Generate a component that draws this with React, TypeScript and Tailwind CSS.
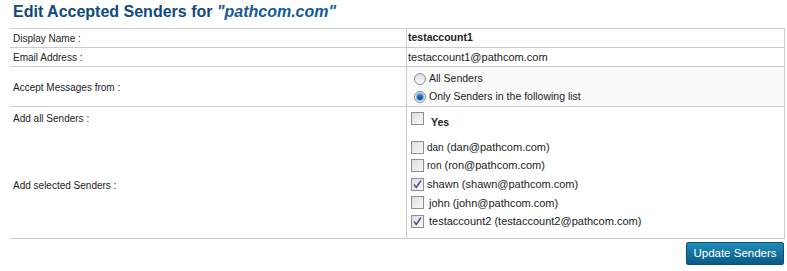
import React from "react";

const font = { fontFamily: '"Liberation Sans", Arial, sans-serif' };

function Radio({ checked }: { checked?: boolean }) {
  return (
    <span className="relative inline-flex h-[12px] w-[12px] shrink-0 items-center justify-center rounded-full border border-[#8e8e8e] bg-gradient-to-b from-[#dcdcdc] to-[#fbfbfb]">
      {checked && (
        <span className="h-[6px] w-[6px] rounded-full bg-gradient-to-b from-[#2f8ad8] to-[#0b3f86] ring-1 ring-[#6fb0e8]" />
      )}
    </span>
  );
}

function Check({ checked }: { checked?: boolean }) {
  return (
    <span className="relative inline-flex h-[13px] w-[13px] shrink-0 items-center justify-center border border-[#8f8f8f] bg-gradient-to-br from-[#dedede] to-[#f8f8f8]">
      {checked && (
        <svg width="11" height="11" viewBox="0 0 11 11" className="absolute left-[0px] top-[0px]">
          <path d="M2 5.5 L4.3 8.5 L9 1.5" fill="none" stroke="#4658a0" strokeWidth="1.6" />
        </svg>
      )}
    </span>
  );
}

const senders = [
  { name: "dan", email: "dan@pathcom.com", checked: false, small: true, ml: "ml-[3px]" },
  { name: "ron", email: "ron@pathcom.com", checked: false, small: true, ml: "ml-[3px]" },
  { name: "shawn", email: "shawn@pathcom.com", checked: true, small: false, ml: "ml-[3px]" },
  { name: "john", email: "john@pathcom.com", checked: false, small: false, ml: "ml-[5px]" },
  { name: "testaccount2", email: "testaccount2@pathcom.com", checked: true, small: false, ml: "ml-[5px]" },
];

export default function App() {
  return (
    <div className="h-[271px] w-[787px] overflow-hidden bg-white text-[#222]" style={font}>
      <div className="h-[28px] pl-[13px] pt-[3px] text-[16px] font-bold leading-[18px] text-[#0f4a7e]">
        Edit Accepted Senders for <span className="italic text-[#155a96]">"pathcom.com"</span>
      </div>
      <div className="ml-[10px] w-[775px] border-t border-[#cccccc]">
        {/* Row 1 */}
        <div className="flex h-[19px] border-b border-[#cccccc]">
          <div className="flex w-[396px] items-center pl-[3px] text-[10px]">Display Name :</div>
          <div className="flex flex-1 items-center border-x border-[#cccccc] pl-[1px] text-[10.5px] font-bold">
            testaccount1
          </div>
        </div>
        {/* Row 2 */}
        <div className="flex h-[19px] border-b border-[#cccccc]">
          <div className="flex w-[396px] items-center pl-[3px] text-[10px]">Email Address :</div>
          <div className="flex flex-1 items-center border-x border-[#cccccc] pl-[1px] text-[11px]">
            testaccount1@pathcom.com
          </div>
        </div>
        {/* Row 3 */}
        <div className="flex h-[40px] border-b border-[#cccccc]">
          <div className="flex w-[396px] items-center pl-[3px] pt-[2px] text-[10px]">Accept Messages from :</div>
          <div className="flex flex-1 flex-col justify-center gap-[6px] border-x border-[#cccccc] bg-[#fafafa] pl-[7px] pt-[3px] text-[10.5px]">
            <div className="flex h-[12px] items-center gap-[3px]">
              <Radio />
              <span>All Senders</span>
            </div>
            <div className="flex h-[12px] items-center gap-[3px]">
              <Radio checked />
              <span>Only Senders in the following list</span>
            </div>
          </div>
        </div>
        {/* Row 4 + 5 */}
        <div className="flex h-[132px] border-b border-[#cccccc]">
          <div className="flex w-[396px] flex-col text-[10px]">
            <div className="h-[24px] pl-[3px] pt-[5px] leading-[13px]">Add all Senders :</div>
            <div className="flex flex-1 items-center pl-[3px] pt-[1px]">Add selected Senders :</div>
          </div>
          <div className="flex flex-1 flex-col border-x border-[#cccccc] pl-[4px]">
            <div className="flex h-[31px] items-start pt-[5px]">
              <Check />
              <span className="ml-[7px] mt-[4px] text-[10.5px] font-bold leading-[13px]">Yes</span>
            </div>
            <div className="flex flex-col">
              {senders.map((s) => (
                <div key={s.name} className="flex h-[18.5px] items-center">
                  <Check checked={s.checked} />
                  <span className={`${s.ml} text-[11px] leading-[14px]`}>
                    <span className={s.small ? "text-[10px]" : ""}>{s.name}</span> ({s.email})
                  </span>
                </div>
              ))}
            </div>
          </div>
        </div>
        {/* Button row */}
        <div className="flex justify-end pr-[1px] pt-[3px]">
          <button className="h-[23px] w-[98px] rounded-[2px] border border-[#0a4f78] bg-gradient-to-b from-[#1f8db8] to-[#0a5985] text-[11.5px] text-white">
            Update Senders
          </button>
        </div>
      </div>
    </div>
  );
}
